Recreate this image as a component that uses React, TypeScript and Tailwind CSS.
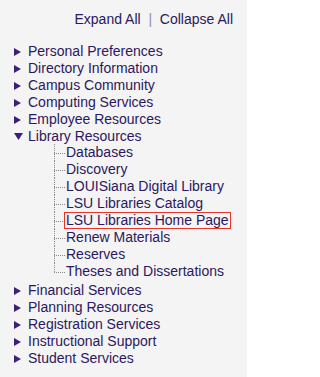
import React from 'react';

const topBefore = [
  'Personal Preferences',
  'Directory Information',
  'Campus Community',
  'Computing Services',
  'Employee Resources',
];

const libraryItems = [
  'Databases',
  'Discovery',
  'LOUISiana Digital Library',
  'LSU Libraries Catalog',
  'LSU Libraries Home Page',
  'Renew Materials',
  'Reserves',
  'Theses and Dissertations',
];

const topAfter = [
  'Financial Services',
  'Planning Resources',
  'Registration Services',
  'Instructional Support',
  'Student Services',
];

const ArrowRight = () => (
  <svg className="w-[7px] h-[8px]" viewBox="0 0 7 8">
    <polygon points="0,0 7,4 0,8" fill="#3b1f78" />
  </svg>
);

const ArrowDown = () => (
  <svg className="w-[9px] h-[7px]" viewBox="0 0 9 7">
    <polygon points="0,0 9,0 4.5,7" fill="#3b1f78" />
  </svg>
);

const TopItem: React.FC<{ label: string; open?: boolean }> = ({ label, open }) => (
  <li className="flex items-center h-[17px] pl-[14px]">
    <span className="w-[14px] flex items-center">{open ? <ArrowDown /> : <ArrowRight />}</span>
    <a className="text-[#2b185e] cursor-pointer">{label}</a>
  </li>
);

export default function App() {
  return (
    <div
      className="w-[247px] h-[377px] bg-[#f4f4f4] text-[14px] leading-[17px] text-[#2b185e] overflow-hidden"
      style={{ fontFamily: '"Liberation Sans", Arial, sans-serif' }}
    >
      <div className="flex justify-end pt-[11px] pr-[14px] h-[28px] whitespace-pre">
        <a className="cursor-pointer">Expand All</a>
        <span className="text-[#8e8fa8]">{'  |  '}</span>
        <a className="cursor-pointer">Collapse All</a>
      </div>

      <ul className="mt-[15px]">
        {topBefore.map((t) => (
          <TopItem key={t} label={t} />
        ))}
        <TopItem label="Library Resources" open />
        <li>
          <ul className="pl-[54px] -mt-[1px] mb-[2px]">
            {libraryItems.map((t, i) => {
              const last = i === libraryItems.length - 1;
              const selected = t === 'LSU Libraries Home Page';
              return (
                <li key={t} className="relative h-[17px] pl-[10px]">
                  <span
                    className={`absolute left-0 top-0 border-l border-dotted border-[#8a8a8a] ${
                      last ? 'h-[9px]' : 'h-full'
                    }`}
                  />
                  <span className="absolute left-0 top-[9px] w-[11px] border-t border-dotted border-[#8a8a8a]" />
                  <a
                    className={`relative inline-block h-[17px] leading-[15px] px-[1px] border whitespace-nowrap cursor-pointer ${
                      selected ? 'border-[#e8352b]' : 'border-transparent'
                    }`}
                  >
                    {t}
                  </a>
                </li>
              );
            })}
          </ul>
        </li>
        {topAfter.map((t) => (
          <TopItem key={t} label={t} />
        ))}
      </ul>
    </div>
  );
}
